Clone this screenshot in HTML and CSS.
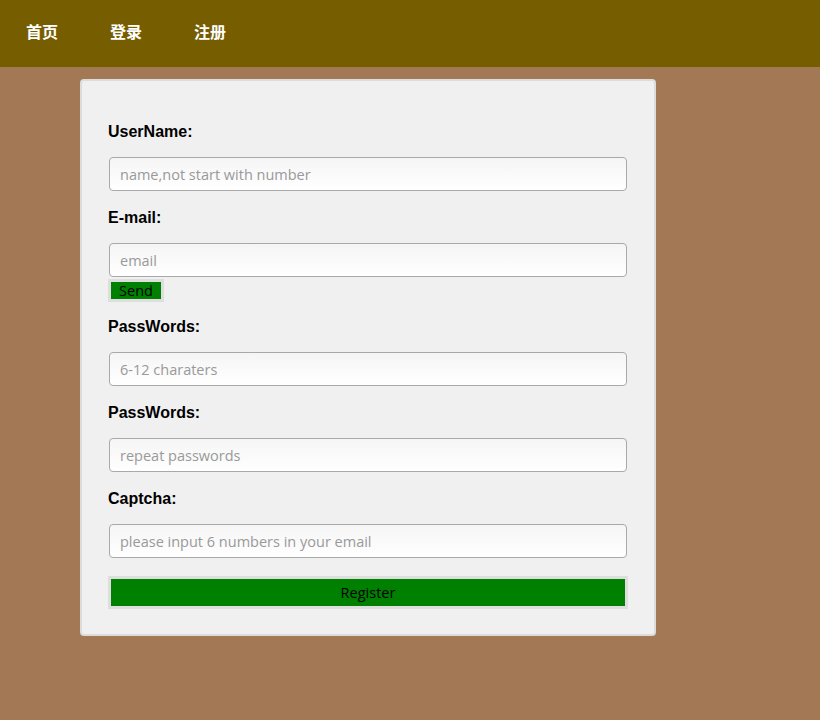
FILE: index.html
```html
<!DOCTYPE html>
<html>
<head>
<meta charset="utf-8">
<link rel="stylesheet" href="styles.css">
</head>
<body>
<header class="nav">
  <a class="nav-link">首页</a>
  <a class="nav-link">登录</a>
  <a class="nav-link">注册</a>
</header>
<main class="card">
  <label class="label">UserName:</label>
  <input class="field" type="text" placeholder="name,not start with number">
  <label class="label">E-mail:</label>
  <input class="field" type="text" placeholder="email">
  <button class="btn btn-send">Send</button>
  <label class="label label-after-send">PassWords:</label>
  <input class="field" type="password" placeholder="6-12 charaters">
  <label class="label">PassWords:</label>
  <input class="field" type="password" placeholder="repeat passwords">
  <label class="label">Captcha:</label>
  <input class="field" type="text" placeholder="please input 6 numbers in your email">
  <button class="btn btn-register">Register</button>
</main>
</body>
</html>
```
FILE: styles.css
```css
html, body {
  margin: 0;
  padding: 0;
}
body {
  background: #a37955;
  font-family: "Liberation Sans", Arial, sans-serif;
  min-height: 720px;
}
.nav {
  height: 67px;
  background: #755d00;
  display: flex;
  align-items: center;
}
.nav-link {
  padding: 0 26px;
  color: #fff;
  font-family: "Noto Sans CJK SC", "Liberation Serif", serif;
  font-weight: bold;
  font-size: 16px;
  line-height: 20px;
  margin-top: -5px;
}
.card {
  margin: 12px 0 0 80px;
  width: 521px;
  box-sizing: content-box;
  border: 2px solid #dcdcdc;
  border-radius: 4px;
  background: #f0f0f0;
  padding: 42px 25px 25px 26px;
  display: flex;
  flex-direction: column;
  align-items: flex-start;
}
.label {
  font-weight: bold;
  font-size: 16px;
  line-height: 18px;
  height: 18px;
  color: #000;
  margin-bottom: 16px;
}
.field + .label {
  margin-top: 18px;
}
.label-after-send {
  margin-top: 16px;
}
.field {
  margin: 0 0 0 1px;
  width: 518px;
  height: 34px;
  box-sizing: border-box;
  border: 1px solid #a9a9a9;
  border-radius: 4px;
  background: linear-gradient(#f5f5f5, #ffffff);
  padding: 0 10px;
  font-family: "Open Sans", "DejaVu Sans", sans-serif;
  font-size: 14.5px;
  color: #333;
  outline: none;
}
.field::placeholder {
  color: #999;
}
.btn {
  box-sizing: border-box;
  border: 3px solid #dedede;
  background: #008000;
  color: #000;
  font-family: "Open Sans", "DejaVu Sans", sans-serif;
  font-size: 14.5px;
  padding: 0;
  border-radius: 0;
}
.btn-send {
  margin-top: 2px;
  width: 56px;
  height: 23px;
  line-height: 17px;
}
.btn-register {
  margin-top: 18px;
  width: 520px;
  height: 33px;
}
```
